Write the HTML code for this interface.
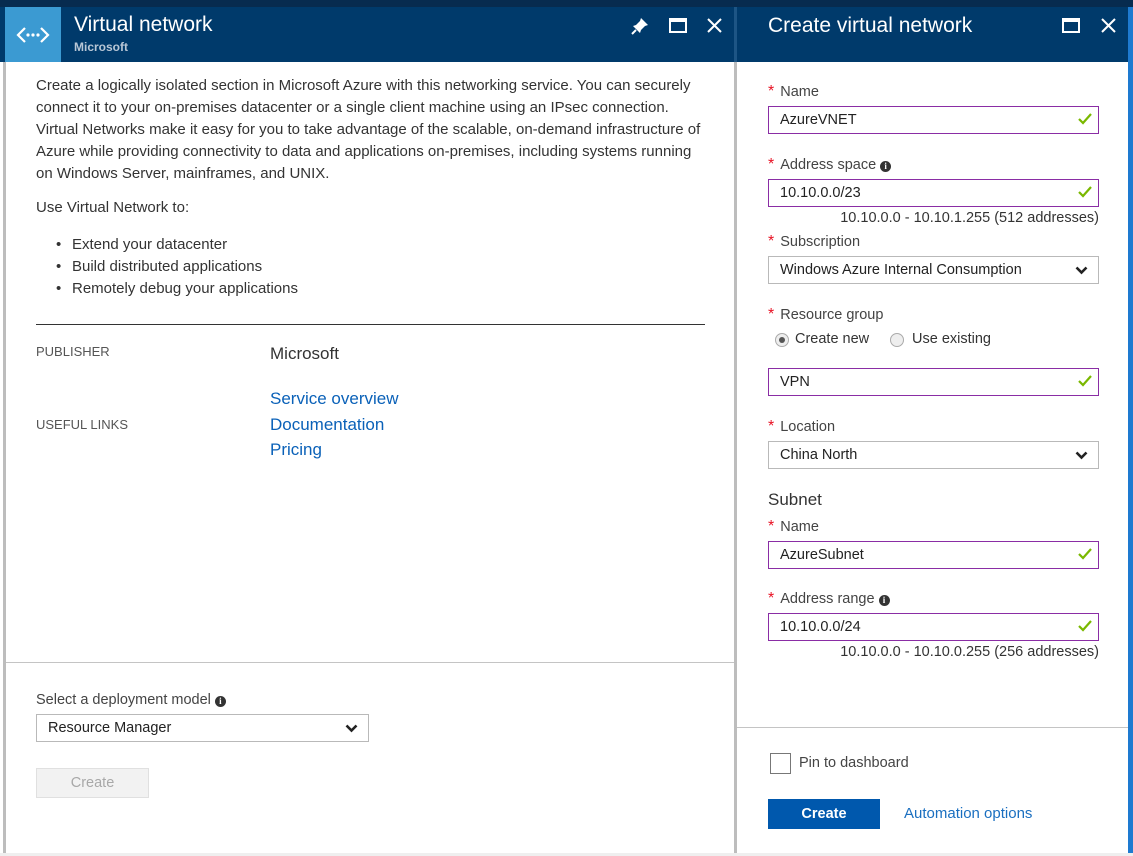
<!DOCTYPE html>
<html><head><meta charset="utf-8"><style>
*{margin:0;padding:0;box-sizing:border-box}
body{width:1133px;height:856px;overflow:hidden;background:#fff;font-family:"Liberation Sans",sans-serif;color:#333;position:relative;font-size:14px}
.a{position:absolute;white-space:nowrap}
.hdr{background:#003a6b}
.lbl{font-size:14.5px;color:#444}
.star{color:#e81123;font-size:16px;margin-right:6px}
.inp{position:absolute;left:768px;width:331px;height:28px;border:1px solid #8a2da5;padding-left:11px;line-height:26px;font-size:14.5px;color:#222}
.sel{position:absolute;border:1px solid #b9b9b9;padding-left:11px;line-height:26px;height:28px;font-size:14.5px;color:#222}
.chk{position:absolute;right:6px;top:6px}
.dd{position:absolute;right:10px;top:9px}
.info{display:inline-block;width:11px;height:11px;border-radius:50%;background:#333;color:#fff;font-size:9px;line-height:11px;text-align:center;font-weight:bold;vertical-align:0px;margin-left:4px;font-family:"Liberation Serif",serif}
.lnk{color:#0a61b8;font-size:17px}
</style></head><body>
<div class="a" style="left:0;top:0;width:1133px;height:7px;background:#072b4f"></div>
<div class="a hdr" style="left:0;top:7px;width:1128px;height:55px"></div>
<div class="a" style="left:0;top:7px;width:5px;height:849px;background:#003a6b"></div>
<div class="a" style="left:0;top:62px;width:5px;height:794px;background:#fff"></div>
<div class="a" style="left:3px;top:62px;width:3px;height:794px;background:#bdbdbd"></div>
<div class="a" style="left:734px;top:7px;width:3px;height:55px;background:#1d5585"></div>
<div class="a" style="left:734px;top:62px;width:3px;height:794px;background:#bdbdbd"></div>
<div class="a" style="left:1128px;top:7px;width:5px;height:849px;background:#1e7ad0"></div>
<div class="a" style="left:0;top:853px;width:1133px;height:3px;background:#efefef"></div>

<div class="a" style="left:5px;top:7px;width:56px;height:55px;background:#3b9ad2"></div>
<svg class="a" style="left:16px;top:25px" width="34" height="20" viewBox="0 0 34 20"><path d="M9 3 L2 10 L9 17 M25 3 L32 10 L25 17" stroke="#fff" stroke-width="2.2" fill="none"/><circle cx="12" cy="10" r="1.6" fill="#fff"/><circle cx="17" cy="10" r="1.6" fill="#fff"/><circle cx="22" cy="10" r="1.6" fill="#fff"/></svg>
<div class="a" style="left:74px;top:13px;font-size:21px;color:#fff">Virtual network</div>
<div class="a" style="left:74px;top:40px;font-size:12px;color:#b9c7d6;font-weight:bold">Microsoft</div>
<svg class="a" style="left:631px;top:17px" width="18" height="18" viewBox="0 0 18 18"><path d="M10 1 L17 8 L14 9 L10 13 L9 16 L2 9 L5 8 L9 4 Z" fill="#fff"/><path d="M5 13 L1 17" stroke="#fff" stroke-width="2"/></svg>
<div class="a" style="left:669px;top:18px;width:18px;height:15px;border:2px solid #fff;border-top-width:4px"></div>
<svg class="a" style="left:707px;top:18px" width="15" height="15"><path d="M1 1 L14 14 M14 1 L1 14" stroke="#fff" stroke-width="2"/></svg>

<div class="a" style="left:768px;top:14px;font-size:21px;color:#fff">Create virtual network</div>
<div class="a" style="left:1062px;top:18px;width:18px;height:15px;border:2px solid #fff;border-top-width:4px"></div>
<svg class="a" style="left:1101px;top:18px" width="15" height="15"><path d="M1 1 L14 14 M14 1 L1 14" stroke="#fff" stroke-width="2"/></svg>

<div class="a" style="left:36px;top:75px;font-size:15px;line-height:22px;color:#333">Create a logically isolated section in Microsoft Azure with this networking service. You can securely<br>connect it to your on-premises datacenter or a single client machine using an IPsec connection.<br>Virtual Networks make it easy for you to take advantage of the scalable, on-demand infrastructure of<br>Azure while providing connectivity to data and applications on-premises, including systems running<br>on Windows Server, mainframes, and UNIX.</div>
<div class="a" style="left:36px;top:199px;font-size:15px">Use Virtual Network to:</div>
<div class="a" style="left:72px;top:234px;line-height:22px;font-size:15px">Extend your datacenter<br>Build distributed applications<br>Remotely debug your applications</div>
<div class="a" style="left:56px;top:234px;line-height:22px;font-size:15px">•<br>•<br>•</div>
<div class="a" style="left:36px;top:324px;width:669px;height:1px;background:#333"></div>
<div class="a" style="left:36px;top:344px;font-size:13px;color:#555">PUBLISHER</div>
<div class="a" style="left:270px;top:344px;font-size:17px;color:#333">Microsoft</div>
<div class="a lnk" style="left:270px;top:389px">Service overview</div>
<div class="a" style="left:36px;top:417px;font-size:13px;color:#555">USEFUL LINKS</div>
<div class="a lnk" style="left:270px;top:415px">Documentation</div>
<div class="a lnk" style="left:270px;top:440px">Pricing</div>

<div class="a" style="left:6px;top:662px;width:728px;height:1px;background:#c4c4c4"></div>
<div class="a lbl" style="left:36px;top:692px">Select a deployment model<span class="info">i</span></div>
<div class="sel" style="left:36px;top:714px;width:333px">Resource Manager<svg class="dd" width="13" height="9"><path d="M1.5 1.5 L6.5 6.5 L11.5 1.5" stroke="#222" stroke-width="2.6" fill="none"/></svg></div>
<div class="a" style="left:36px;top:768px;width:113px;height:30px;background:#f2f2f2;border:1px solid #e0e0e0;color:#a8a8a8;text-align:center;line-height:28px;font-size:14.5px">Create</div>

<div class="a lbl" style="left:768px;top:83px"><span class="star">*</span>Name</div>
<div class="inp" style="top:106px">AzureVNET<svg class="chk" width="14" height="12"><path d="M1 6 L5 10 L13 1" stroke="#7ab800" stroke-width="2.2" fill="none"/></svg></div>
<div class="a lbl" style="left:768px;top:156px"><span class="star">*</span>Address space<span class="info">i</span></div>
<div class="inp" style="top:179px">10.10.0.0/23<svg class="chk" width="14" height="12"><path d="M1 6 L5 10 L13 1" stroke="#7ab800" stroke-width="2.2" fill="none"/></svg></div>
<div class="a" style="right:34px;top:210px;font-size:14.5px;color:#333">10.10.0.0 - 10.10.1.255 (512 addresses)</div>
<div class="a lbl" style="left:768px;top:233px"><span class="star">*</span>Subscription</div>
<div class="sel" style="left:768px;top:256px;width:331px">Windows Azure Internal Consumption<svg class="dd" width="13" height="9"><path d="M1.5 1.5 L6.5 6.5 L11.5 1.5" stroke="#222" stroke-width="2.6" fill="none"/></svg></div>
<div class="a lbl" style="left:768px;top:306px"><span class="star">*</span>Resource group</div>
<div class="a" style="left:775px;top:333px;width:14px;height:14px;border-radius:50%;border:1px solid #aaa;background:#eee"><div style="position:absolute;left:3px;top:3px;width:6px;height:6px;border-radius:50%;background:#555"></div></div>
<div class="a" style="left:795px;top:331px;color:#333;font-size:14.5px">Create new</div>
<div class="a" style="left:890px;top:333px;width:14px;height:14px;border-radius:50%;border:1px solid #aaa;background:#eee"></div>
<div class="a" style="left:912px;top:331px;color:#333;font-size:14.5px">Use existing</div>
<div class="inp" style="top:368px">VPN<svg class="chk" width="14" height="12"><path d="M1 6 L5 10 L13 1" stroke="#7ab800" stroke-width="2.2" fill="none"/></svg></div>
<div class="a lbl" style="left:768px;top:418px"><span class="star">*</span>Location</div>
<div class="sel" style="left:768px;top:441px;width:331px">China North<svg class="dd" width="13" height="9"><path d="M1.5 1.5 L6.5 6.5 L11.5 1.5" stroke="#222" stroke-width="2.6" fill="none"/></svg></div>
<div class="a" style="left:768px;top:490px;font-size:17px;color:#333">Subnet</div>
<div class="a lbl" style="left:768px;top:518px"><span class="star">*</span>Name</div>
<div class="inp" style="top:541px">AzureSubnet<svg class="chk" width="14" height="12"><path d="M1 6 L5 10 L13 1" stroke="#7ab800" stroke-width="2.2" fill="none"/></svg></div>
<div class="a lbl" style="left:768px;top:590px"><span class="star">*</span>Address range<span class="info">i</span></div>
<div class="inp" style="top:613px">10.10.0.0/24<svg class="chk" width="14" height="12"><path d="M1 6 L5 10 L13 1" stroke="#7ab800" stroke-width="2.2" fill="none"/></svg></div>
<div class="a" style="right:34px;top:644px;font-size:14.5px;color:#333">10.10.0.0 - 10.10.0.255 (256 addresses)</div>

<div class="a" style="left:737px;top:727px;width:391px;height:1px;background:#c4c4c4"></div>
<div class="a" style="left:770px;top:753px;width:21px;height:21px;border:1px solid #777"></div>
<div class="a" style="left:799px;top:755px;color:#444;font-size:14.5px">Pin to dashboard</div>
<div class="a" style="left:768px;top:799px;width:112px;height:30px;background:#0058ad;color:#fff;font-weight:bold;text-align:center;line-height:30px;font-size:14.5px">Create</div>
<div class="a" style="left:904px;top:805px;color:#1a6fc0;font-size:15px">Automation options</div>
</body></html>
